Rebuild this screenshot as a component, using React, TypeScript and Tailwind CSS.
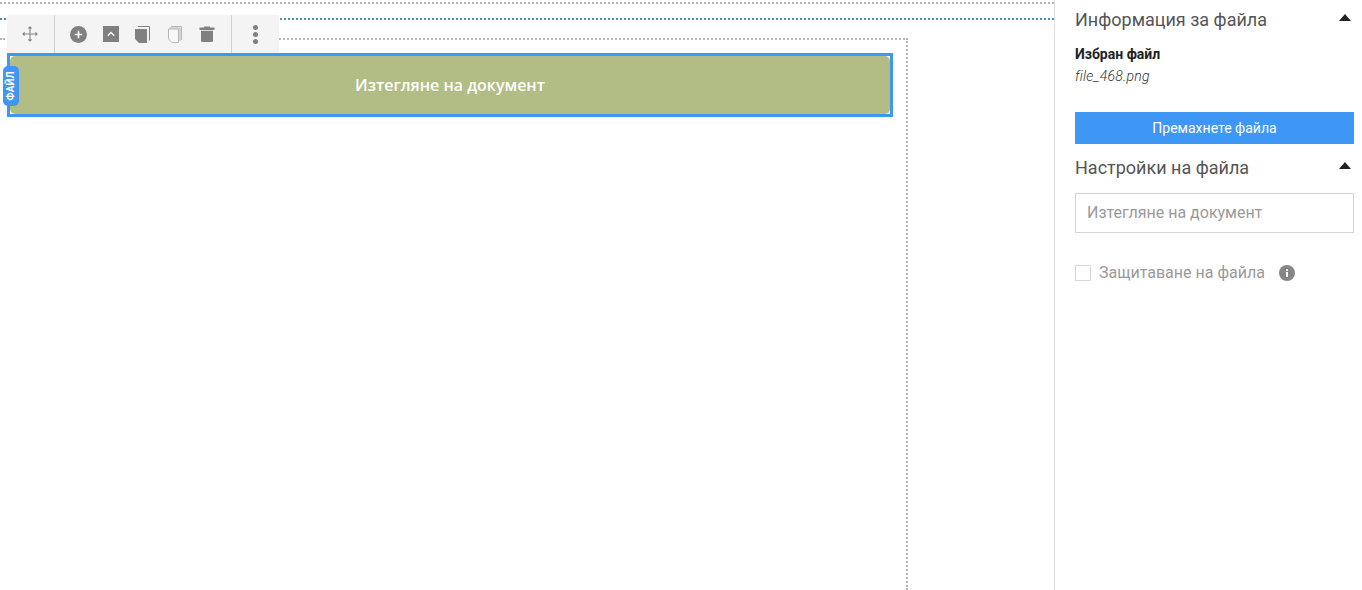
import React from "react";

const Divider = () => <div className="w-px self-stretch bg-[#d0d0d0]" />;

function Toolbar() {
  return (
    <div className="absolute left-[-3px] top-[-41px] flex h-[38px] w-[272px] items-stretch bg-[#f4f4f4]">
      <div className="flex w-[47px] items-center justify-center pr-[2px]">
        <svg width="16" height="16" viewBox="0 0 16 16" fill="none" stroke="#858585" strokeWidth="1.1">
          <path d="M8 1v14M1 8h14" />
          <path d="M6.500 2.500 8 1l1.500 1.500M6.500 13.500 8 15l1.500-1.500M2.500 6.500 1 8l1.500 1.500M13.500 6.500 15 8l-1.500 1.500" fill="#858585" />
        </svg>
      </div>
      <Divider />
      <div className="flex w-[176px] items-center gap-[16px] pl-[15px]">
        <svg width="17" height="17" viewBox="0 0 17 17">
          <circle cx="8.500" cy="8.500" r="8.500" fill="#808080" />
          <path d="M8.500 4.800v7.400M4.800 8.500h7.400" stroke="#fff" strokeWidth="1.600" />
        </svg>
        <svg width="16" height="16" viewBox="0 0 16 16">
          <rect width="16" height="16" fill="#808080" />
          <path d="M4.800 9.800 8 6.600l3.200 3.200" fill="none" stroke="#fff" strokeWidth="1.400" />
        </svg>
        <svg width="15" height="17" viewBox="0 0 15 17">
          <path d="M3 0.500h11.500v14" fill="none" stroke="#808080" strokeWidth="1" />
          <path d="M1 2.300h12.200v13" fill="none" stroke="#f4f4f4" strokeWidth="0.800" />
          <path d="M0 3h12v14H4l-4-4z" fill="#808080" />
          <path d="M0 14l3 3-3 0z" fill="#f4f4f4" />
        </svg>
        <svg width="15" height="17" viewBox="0 0 15 17" fill="none" stroke="#b8b8b8" strokeWidth="1" className="ml-[2px]">
          <path d="M3 0.500h10.500v13.500" />
          <path d="M1.500 2h10.500v13" />
          <path d="M0.500 3h10V16.500H4l-3.500-3.500z" fill="#f8f8f8" />
        </svg>
        <svg width="16" height="16" viewBox="0 0 16 16">
          <path d="M5 0.500h6V2H5z" fill="#808080" />
          <path d="M0.500 1.500h15v2.500H.5z" fill="#808080" />
          <path d="M2 4.800h12v9.700A1.500 1.500 0 0 1 12.500 16h-9A1.500 1.500 0 0 1 2 14.500z" fill="#808080" />
        </svg>
      </div>
      <Divider />
      <div className="flex flex-1 flex-col items-center justify-center gap-[2px] pr-[1px]">
        <span className="size-[5px] rounded-full bg-[#808080]" />
        <span className="size-[5px] rounded-full bg-[#808080]" />
        <span className="size-[5px] rounded-full bg-[#808080]" />
      </div>
    </div>
  );
}

function SectionTitle({ title }: { title: string }) {
  return (
    <div className="flex items-center justify-between">
      <h2 className="text-[18px] leading-[24px] font-normal text-[#555555]">{title}</h2>
      <svg width="12" height="7" viewBox="0 0 12 7" className="mr-[3px] mb-[6px]">
        <path d="M6 0l6 7H0z" fill="#222222" />
      </svg>
    </div>
  );
}

export default function App() {
  return (
    <div className="flex h-[590px] w-[1362px] overflow-hidden bg-white font-['Roboto',sans-serif]">
      <main className="flex w-[1054px] flex-col pt-[2px]">
        <div className="border-t-2 border-dotted border-[#b5b5b5]" />
        <div className="mt-[14px] border-t-2 border-dotted border-[#4a90c8]" />
        <div className="mt-[18px] flex w-[908px] flex-1 flex-col border-t-2 border-r-2 border-dotted border-[#b5b5b5] pt-[13px] pl-[7px]">
          <div className="relative h-[64px] w-[886px] border-[3px] border-[#3f97ef]">
            <Toolbar />
            <div className="flex h-full items-center justify-center rounded-[5px] bg-[#b2bd85] font-['Open_Sans',sans-serif] text-[16px] font-semibold text-white">
              Изтегляне на документ
            </div>
            <div className="absolute top-[10px] left-[-7px] flex h-[40px] w-[16px] items-center justify-center rounded-[5px] bg-[#3f97ef]">
              <span className="rotate-[-90deg] text-[10px] leading-none font-bold whitespace-nowrap text-white">ФАЙЛ</span>
            </div>
          </div>
        </div>
      </main>
      <aside className="w-[308px] border-l border-[#e2e2e2] pt-[8px] pr-[8px] pl-[20px]">
        <SectionTitle title="Информация за файла" />
        <p className="mt-[13px] text-[14px] leading-[18px] font-bold text-[#222222]">Избран файл</p>
        <p className="mt-[4px] text-[14px] leading-[18px] font-light tracking-[0.25px] text-[#333333] italic">file_468.png</p>
        <button className="mt-[27px] block h-[32px] w-full bg-[#3f97f5] text-[14px] text-white">Премахнете файла</button>
        <div className="mt-[12px]">
          <SectionTitle title="Настройки на файла" />
        </div>
        <input
          readOnly
          placeholder="Изтегляне на документ"
          className="mt-[13px] block h-[40px] w-full border border-[#d5d5d5] px-[11px] pb-[2px] text-[16px] text-[#8f8f8f] placeholder:text-[#9a9a9a]"
        />
        <div className="mt-[31px] flex items-center">
          <span className="size-[16px] border border-[#d8d8d8] bg-white" />
          <span className="ml-[8px] text-[16px] leading-[18px] text-[#9a9a9a]">Защитаване на файла</span>
          <svg width="16" height="16" viewBox="0 0 16 16" className="ml-[14px]">
            <circle cx="8" cy="8" r="8" fill="#868686" />
            <rect x="7" y="7" width="2" height="5" fill="#fff" />
            <rect x="7" y="4" width="2" height="2" fill="#fff" />
          </svg>
        </div>
      </aside>
    </div>
  );
}
